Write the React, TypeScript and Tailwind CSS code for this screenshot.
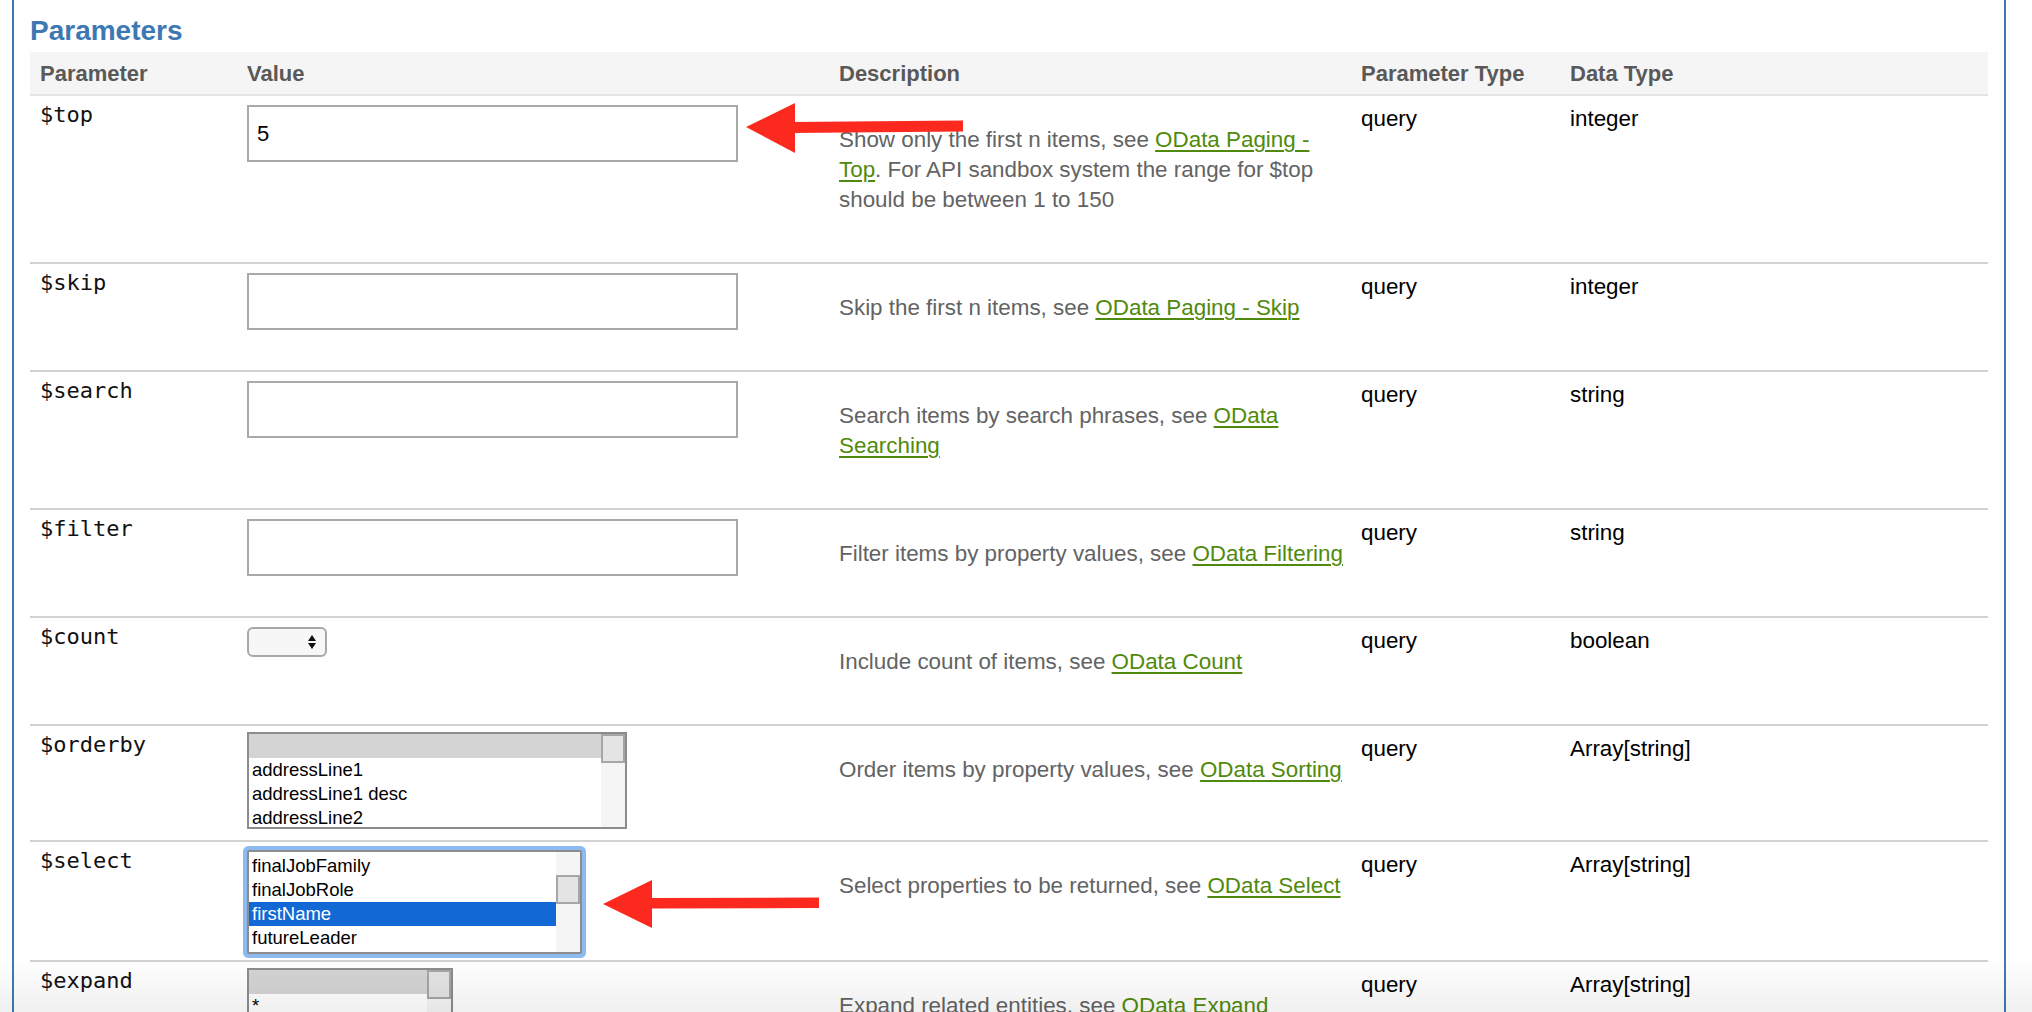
import React from 'react';

type ListSpec = {
  items: string[];
  active: number;
  tone: 'gray' | 'blue';
  focused?: boolean;
  box: string;
  track: string;
  lead: string;
};

type Row = {
  name: string;
  kind: 'input' | 'count' | 'list';
  value?: string;
  cellPad: string;
  list?: ListSpec;
  text: string;
  link: string;
  after?: string;
  dataType: string;
};

const rows: Row[] = [
  {
    name: '$top',
    kind: 'input',
    value: '5',
    cellPad: 'pt-[9px]',
    text: 'Show only the first n items, see ',
    link: 'OData Paging - Top',
    after: '. For API sandbox system the range for $top should be between 1 to 150',
    dataType: 'integer',
  },
  {
    name: '$skip',
    kind: 'input',
    cellPad: 'pt-[9px]',
    text: 'Skip the first n items, see ',
    link: 'OData Paging - Skip',
    dataType: 'integer',
  },
  {
    name: '$search',
    kind: 'input',
    cellPad: 'pt-[9px]',
    text: 'Search items by search phrases, see ',
    link: 'OData Searching',
    dataType: 'string',
  },
  {
    name: '$filter',
    kind: 'input',
    cellPad: 'pt-[9px]',
    text: 'Filter items by property values, see ',
    link: 'OData Filtering',
    dataType: 'string',
  },
  {
    name: '$count',
    kind: 'count',
    cellPad: 'pt-[9px]',
    text: 'Include count of items, see ',
    link: 'OData Count',
    dataType: 'boolean',
  },
  {
    name: '$orderby',
    kind: 'list',
    cellPad: 'pt-[6px] pb-[11px]',
    list: {
      items: ['', 'addressLine1', 'addressLine1 desc', 'addressLine2', 'addressLine2 desc'],
      active: 0,
      tone: 'gray',
      box: 'w-[380px] h-[97px]',
      track: 'pt-0',
      lead: 'pt-0',
    },
    text: 'Order items by property values, see ',
    link: 'OData Sorting',
    dataType: 'Array[string]',
  },
  {
    name: '$select',
    kind: 'list',
    cellPad: 'pt-[8px] pb-[6px]',
    list: {
      items: ['finalJobFamily', 'finalJobRole', 'firstName', 'futureLeader', 'gender'],
      active: 2,
      tone: 'blue',
      focused: true,
      box: 'w-[335px] h-[104px]',
      track: 'pt-[23px]',
      lead: 'pt-[2px]',
    },
    text: 'Select properties to be returned, see ',
    link: 'OData Select',
    dataType: 'Array[string]',
  },
  {
    name: '$expand',
    kind: 'list',
    cellPad: 'pt-[6px] pb-[11px]',
    list: {
      items: ['', '*', 'address', 'manager'],
      active: 0,
      tone: 'gray',
      box: 'w-[206px] h-[97px]',
      track: 'pt-0',
      lead: 'pt-0',
    },
    text: 'Expand related entities, see ',
    link: 'OData Expand',
    dataType: 'Array[string]',
  },
];

const cols = 'grid grid-cols-[207px_592px_522px_209px_1fr]';

const ListBox = ({ spec }: { spec: ListSpec }) => (
  <div
    className={`flex overflow-hidden border-2 border-[#8c8c8c] bg-white ${spec.box} ${
      spec.focused ? 'rounded-[2px] ring-4 ring-[#8dbbf0]' : ''
    }`}
  >
    <div className={`flex-1 ${spec.lead}`}>
      {spec.items.map((item, i) => (
        <div
          key={i}
          className={`h-[24px] whitespace-nowrap pl-[3px] text-[18.5px] leading-[24px] ${
            i === spec.active
              ? spec.tone === 'blue'
                ? 'bg-[#1268d4] text-white'
                : 'bg-[#d4d4d4] text-black'
              : 'text-black'
          }`}
        >
          {item}
        </div>
      ))}
    </div>
    <div className={`w-[24px] bg-[#f5f5f5] ${spec.track}`}>
      <div className="h-[29px] w-[24px] border-2 border-[#a6a6a6] bg-[#e4e4e4]" />
    </div>
  </div>
);

const CountSelect = () => (
  <div className="flex h-[30px] w-[80px] items-center justify-end rounded-[6px] border-2 border-[#a8a8a8] bg-[#f7f7f7] pr-[8px]">
    <svg width="10" height="16" viewBox="0 0 10 16">
      <polygon points="5,1 9,7 1,7" fill="#111" />
      <polygon points="1,9 9,9 5,15" fill="#111" />
    </svg>
  </div>
);

const ParamRow = ({ row, first }: { row: Row; first: boolean }) => (
  <div className={`${cols} ${first ? '' : 'border-t-2 border-[#d2d2d2]'}`}>
    <div className="pl-[10px] pt-[4px] font-['DejaVu_Sans_Mono',monospace] text-[22px] leading-[30px] text-[#111]">
      {row.name}
    </div>
    <div className={`pl-[10px] ${row.cellPad}`}>
      {row.kind === 'input' && (
        <div className="flex h-[57px] w-[491px] items-center border-2 border-[#a9a9a9] bg-white pl-[8px] text-[22px] text-black">
          {row.value}
        </div>
      )}
      {row.kind === 'count' && <CountSelect />}
      {row.kind === 'list' && row.list && <ListBox spec={row.list} />}
    </div>
    <div className="pb-[47px] pl-[10px] pt-[29px] text-[22.4px] leading-[30px] text-[#636363]">
      {row.text}
      <a className="text-[#508a0c] underline decoration-2 underline-offset-[3px]">{row.link}</a>
      {row.after}
    </div>
    <div className="pl-[10px] pt-[8px] text-[22.4px] leading-[30px] text-black">query</div>
    <div className="pl-[10px] pt-[8px] text-[22.4px] leading-[30px] text-black">{row.dataType}</div>
  </div>
);

const App = () => {
  return (
    <div className="relative h-[1012px] w-full overflow-hidden bg-white font-['Liberation_Sans',Arial,sans-serif]">
      <div className="ml-[12px] h-full w-[1994px] border-x-2 border-[#3f79b5] pl-[16px] pr-[16px]">
        <h2 className="pt-[15px] text-[28px] font-bold leading-[32px] text-[#3d78b3]">Parameters</h2>
        <div className="mt-[5px]">
          <div
            className={`${cols} h-[44px] items-center border-b-2 border-[#e4e4e4] bg-[#f5f5f5] text-[22px] font-bold text-[#595959]`}
          >
            <div className="pl-[10px]">Parameter</div>
            <div className="pl-[10px]">Value</div>
            <div className="pl-[10px]">Description</div>
            <div className="pl-[10px]">Parameter Type</div>
            <div className="pl-[10px]">Data Type</div>
          </div>
          {rows.map((row, i) => (
            <ParamRow key={row.name} row={row} first={i === 0} />
          ))}
        </div>
      </div>

      {/* annotation arrows drawn over the page */}
      <svg className="pointer-events-none absolute left-0 top-0" width="2032" height="1012">
        <polygon points="746,127 795,103 795,153" fill="#fc2a1e" />
        <polygon points="792,122 963,120.5 963,131.5 792,133" fill="#fc2a1e" />
        <polygon points="603,904 652,880 652,928" fill="#fc2a1e" />
        <polygon points="649,898 819,897.5 819,908 649,908.5" fill="#fc2a1e" />
      </svg>

      <div className="pointer-events-none absolute bottom-0 left-0 h-[55px] w-full bg-gradient-to-b from-transparent to-black/[0.06]" />
    </div>
  );
};

export default App;
